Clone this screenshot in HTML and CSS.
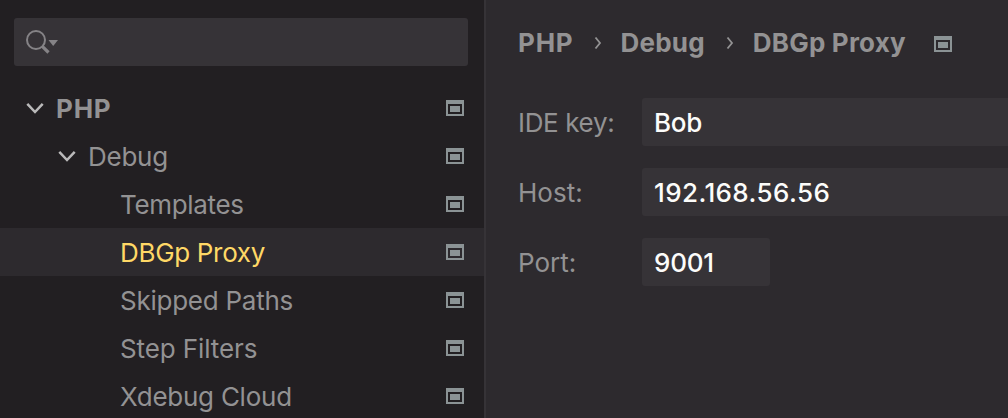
FILE: index.html
```html
<!DOCTYPE html>
<html lang="en">
<head>
<meta charset="utf-8">
<title>DBGp Proxy</title>
<link rel="stylesheet" href="styles.css">
</head>
<body>
<svg class="defs" width="0" height="0">
  <symbol id="scope" viewBox="0 0 18 16"><path fill-rule="evenodd" d="M0 0H18V16H0ZM2 4V14H16V4ZM4 6H14V12H4Z"/></symbol>
  <symbol id="chevron" viewBox="0 0 18 12"><path d="M1.300 1.800L9 10L16.700 1.800"/></symbol>
  <symbol id="next" viewBox="0 0 8 14"><path d="M1.500 1.500L6 7L1.500 12.500"/></symbol>
</svg>
<div class="settings">
  <aside class="sidebar">
    <div class="search">
      <svg width="34" height="26" viewBox="0 0 34 26">
        <circle cx="10" cy="10" r="9"/>
        <path class="handle" d="M16.300 16.300L22.500 22.500"/>
        <path class="arrow" d="M22.500 10H32L27.200 16Z"/>
      </svg>
    </div>
    <nav class="tree">
      <div class="row root"><svg class="chevron"><use href="#chevron"/></svg><span class="name t-php">PHP</span><svg class="scope"><use href="#scope"/></svg></div>
      <div class="row group"><svg class="chevron"><use href="#chevron"/></svg><span class="name t-debug">Debug</span><svg class="scope"><use href="#scope"/></svg></div>
      <div class="row leaf"><span class="name t-templates">Templates</span><svg class="scope"><use href="#scope"/></svg></div>
      <div class="row leaf selected"><span class="name t-proxy">DBGp Proxy</span><svg class="scope"><use href="#scope"/></svg></div>
      <div class="row leaf"><span class="name t-skipped">Skipped Paths</span><svg class="scope"><use href="#scope"/></svg></div>
      <div class="row leaf"><span class="name t-step">Step Filters</span><svg class="scope"><use href="#scope"/></svg></div>
      <div class="row leaf"><span class="name t-cloud">Xdebug Cloud</span><svg class="scope"><use href="#scope"/></svg></div>
    </nav>
  </aside>
  <main class="content">
    <header class="crumbs">
      <span class="crumb c-php">PHP</span><svg class="next"><use href="#next"/></svg>
      <span class="crumb c-debug">Debug</span><svg class="next"><use href="#next"/></svg>
      <span class="crumb c-proxy">DBGp Proxy</span><svg class="scope"><use href="#scope"/></svg>
    </header>
    <div class="form">
      <div class="label l-key">IDE key:</div><div class="field wide v-key">Bob</div>
      <div class="label l-host">Host:</div><div class="field wide v-host">192.168.56.56</div>
      <div class="label l-port">Port:</div><div class="field port">9001</div>
    </div>
  </main>
</div>
</body>
</html>
```
FILE: styles.css
```css
* { box-sizing: border-box; }
body {
  margin: 0;
  overflow: hidden;
  background: #2d2a2e;
  color: #939293;
  font-family: Inter, "Liberation Sans", sans-serif;
  font-size: 26px;
  line-height: 48px;
  white-space: nowrap;
}
svg { display: block; flex: none; }
.defs { position: absolute; }
.settings { display: flex; height: 418px; overflow: hidden; }
.sidebar {
  flex: none;
  width: 486px;
  padding-top: 18px;
  background: #221f22;
  border-right: 2px solid #363337;
}
.search {
  height: 48px;
  margin: 0 16px 0 14px;
  padding: 12px;
  border-radius: 3px;
  background: #363337;
}
.search svg { fill: none; stroke: #858386; stroke-width: 2; }
.search .handle { stroke-width: 3.2; }
.search .arrow { fill: #858386; stroke: none; }
.tree { margin-top: 18px; }
.row { display: flex; align-items: center; height: 48px; padding-right: 20px; }
.root { padding-left: 26px; font-weight: 700; }
.group { padding-left: 58px; }
.leaf { padding-left: 120px; }
.selected { background: #2d2a2e; color: #ffd866; }
.name { flex: 1; padding-top: 2px; }
.t-php, .c-php { letter-spacing: 0.8px; }
.t-debug, .t-skipped, .t-cloud { letter-spacing: -0.25px; }
.t-templates, .t-proxy { letter-spacing: -0.32px; }
.t-step { letter-spacing: -0.1px; }
.chevron {
  width: 18px;
  height: 12px;
  margin-right: 12px;
  fill: none;
  stroke: #bab9ba;
  stroke-width: 2.5;
}
.scope { width: 18px; height: 16px; fill: #8b9395; }
.content { flex: 1; min-width: 0; padding: 19px 0 0 32px; }
.crumbs { display: flex; align-items: center; height: 48px; font-weight: 700; }
.crumbs .scope { margin: 2px 0 0 28px; }
.c-debug { letter-spacing: 0.2px; }
.c-proxy { letter-spacing: 0.2px; }
.next {
  width: 8px;
  height: 14px;
  margin: 0 19px 0 20px;
  fill: none;
  stroke: #939293;
  stroke-width: 1.8;
}
.c-debug + .next { margin-left: 21px; }
.form {
  display: grid;
  grid-template-columns: 124px 1fr;
  row-gap: 22px;
  margin-top: 31px;
}
.label, .field { height: 48px; padding-top: 1px; }
.l-key { letter-spacing: -0.35px; }
.field {
  padding-left: 12px;
  background: #363337;
  color: #fcfcfa;
  font-weight: 500;
}
.v-key { letter-spacing: -0.3px; }
.v-host { letter-spacing: 0.4px; }
.wide { border-radius: 3px 0 0 3px; }
.port { width: 128px; border-radius: 3px; letter-spacing: -0.2px; }
```
